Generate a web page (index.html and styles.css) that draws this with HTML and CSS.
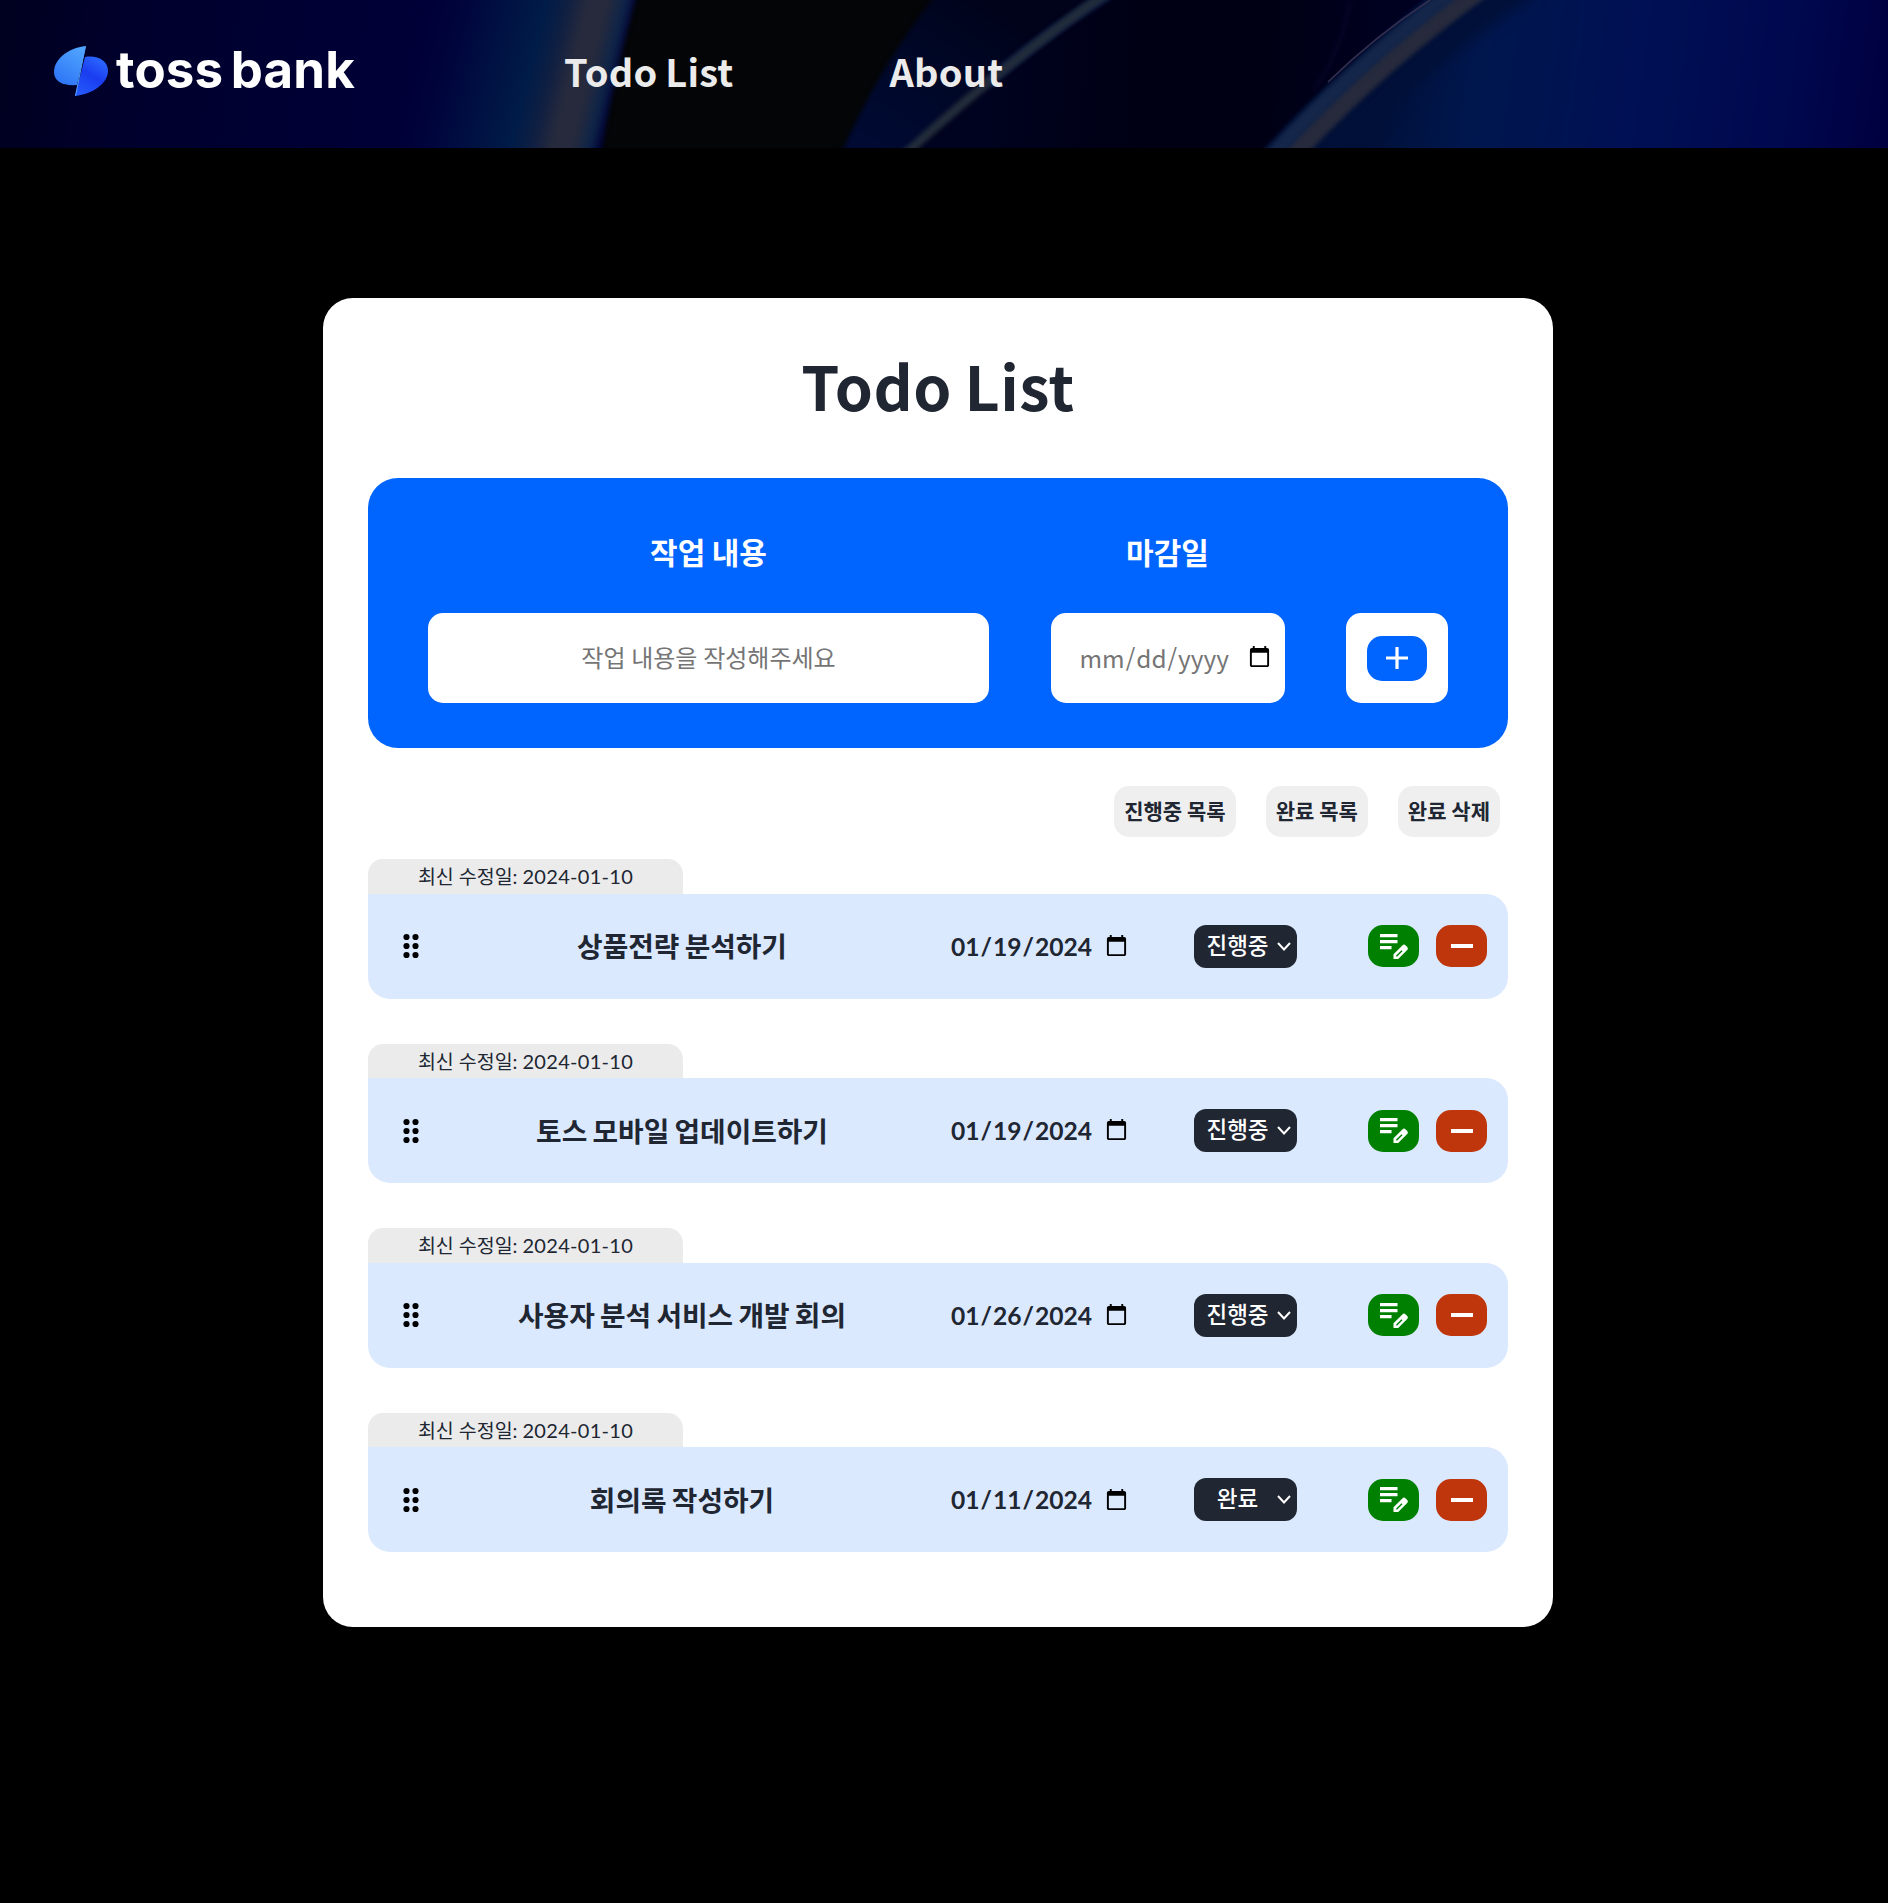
FILE: index.html
```html
<!DOCTYPE html>
<html lang="ko">
<head>
<meta charset="utf-8">
<title>Todo List</title>
<link rel="stylesheet" href="styles.css">
</head>
<body>
<header class="header">
  <svg class="header-bg" viewBox="0 0 1888 148" preserveAspectRatio="none" aria-hidden="true">
    <defs>
      <linearGradient id="left" gradientUnits="userSpaceOnUse" x1="0" y1="0" x2="420" y2="60"><stop offset="0" stop-color="#00001f"/><stop offset=".3" stop-color="#00002c"/><stop offset="1" stop-color="#000038"/></linearGradient>
      <linearGradient id="beam" gradientUnits="userSpaceOnUse" x1="416" y1="24" x2="620" y2="74"><stop offset="0" stop-color="#000038" stop-opacity="0"/><stop offset=".25" stop-color="#00083e"/><stop offset=".58" stop-color="#001c48"/><stop offset=".68" stop-color="#101f42"/><stop offset=".77" stop-color="#262a3c"/><stop offset=".86" stop-color="#262a3c"/><stop offset=".94" stop-color="#0e2448"/><stop offset="1" stop-color="#000034"/></linearGradient>
      <linearGradient id="wedge" gradientUnits="userSpaceOnUse" x1="880" y1="148" x2="980" y2="0"><stop offset="0" stop-color="#000a32"/><stop offset=".5" stop-color="#000828"/><stop offset="1" stop-color="#00031a"/></linearGradient>
      <linearGradient id="mid" gradientUnits="userSpaceOnUse" x1="990" y1="80" x2="1380" y2="100"><stop offset="0" stop-color="#00031f"/><stop offset=".4" stop-color="#000014"/><stop offset=".7" stop-color="#000014"/><stop offset="1" stop-color="#000020"/></linearGradient>
      <linearGradient id="right" gradientUnits="userSpaceOnUse" x1="1380" y1="40" x2="1888" y2="110"><stop offset="0" stop-color="#001038"/><stop offset=".2" stop-color="#00174e"/><stop offset=".5" stop-color="#001054"/><stop offset=".8" stop-color="#00084e"/><stop offset="1" stop-color="#000040"/></linearGradient>
      <filter id="soft" filterUnits="userSpaceOnUse" x="-20" y="-30" width="1930" height="210" color-interpolation-filters="sRGB"><feGaussianBlur stdDeviation="7"/></filter>
      <filter id="edge" filterUnits="userSpaceOnUse" x="-20" y="-30" width="1930" height="210" color-interpolation-filters="sRGB"><feGaussianBlur stdDeviation="2"/></filter>
    </defs>
    <rect width="1888" height="148" fill="#040507"/>
    <path d="M-10 -20H520V170H-10Z" fill="url(#left)"/>
    <path d="M350 -20H642Q617 60 598 170H350Z" fill="url(#beam)" filter="url(#edge)"/>
    <path d="M948 -20Q880 60 834 170H1000L1200 -20Z" fill="url(#wedge)" filter="url(#edge)"/>
    <path d="M1136 -20Q1006 60 888 170H1300L1460 -20Z" fill="url(#mid)"/>
    <path d="M1132 -20Q1056 24 986 84" fill="none" stroke="#0c1c48" stroke-width="10" filter="url(#edge)"/>
    <path d="M1126 -20Q1006 60 888 170" fill="none" stroke="#222c3a" stroke-width="9" filter="url(#edge)"/>
    <path d="M1450 -20Q1338 65 1245 170H1900V-20Z" fill="url(#right)" filter="url(#edge)"/>
    <path d="M1527 -20Q1398 65 1317 170" fill="none" stroke="#001038" stroke-width="34" filter="url(#soft)"/>
    <path d="M1493 -20Q1373 65 1279 170" fill="none" stroke="#262a3c" stroke-width="20" filter="url(#edge)"/>
    <path d="M1469 -20Q1352 65 1259 170" fill="none" stroke="#14264a" stroke-width="15" filter="url(#edge)"/>
    <path d="M1430 0Q1375 36 1328 82" fill="none" stroke="#35304e" stroke-width="1.5"/>
    <path d="M1350 0Q1342 50 1314 90" fill="none" stroke="#06062a" stroke-width="3" filter="url(#edge)"/>
  </svg>
  <a class="logo" href="#" aria-label="toss bank">
    <svg class="logo-mark" viewBox="0 0 56 52" aria-hidden="true">
      <defs>
        <linearGradient id="lm" x1=".8" y1="0" x2=".3" y2="1"><stop offset="0" stop-color="#51a6ff"/><stop offset="1" stop-color="#2e75f6"/></linearGradient>
        <linearGradient id="rm" x1=".8" y1="0" x2=".3" y2="1"><stop offset="0" stop-color="#2e6cff"/><stop offset=".5" stop-color="#1a3df0"/><stop offset="1" stop-color="#2458fa"/></linearGradient>
      </defs>
      <path d="M32 12C45 10 55 16 55 26C55 38 40 49 22 51Z" fill="url(#rm)"/>
      <path d="M33 1C14 3 1 15 1 27C1 36 9 41 24 40Z" fill="url(#lm)"/>
      <path d="M32.500 1L22.500 51" stroke="#4fa0ff"/>
    </svg>
    <span class="logo-text">toss bank</span>
  </a>
  <nav class="nav"><a href="#">Todo List</a><a href="#">About</a></nav>
</header>
<main class="card">
  <h1 class="title">Todo List</h1>
  <form class="form">
    <label class="field field-task"><span class="label">작업 내용</span><input class="box" type="text" placeholder="작업 내용을 작성해주세요"></label>
    <label class="field field-date"><span class="label">마감일</span><input class="box date-box" type="date"></label>
    <div class="add-box"><button class="add" type="button" aria-label="추가"><svg viewBox="0 0 22 22" width="22" height="22"><path d="M11 0V22M0 11H22" stroke="#fff" stroke-width="3.200"/></svg></button></div>
  </form>
  <div class="filters"><button>진행중 목록</button><button>완료 목록</button><button>완료 삭제</button></div>
  <ul class="list" id="list"></ul>
</main>
<script src="app.js"></script>
</body>
</html>
```
FILE: app.js
```js
const todos = [
  ["상품전략 분석하기", "2024-01-19", "진행중"],
  ["토스 모바일 업데이트하기", "2024-01-19", "진행중"],
  ["사용자 분석 서비스 개발 회의", "2024-01-26", "진행중"],
  ["회의록 작성하기", "2024-01-11", "완료"],
];

document.getElementById("list").innerHTML = todos.map(([task, due, state]) => `
<li class="item">
  <div class="tab">최신 수정일: <span class="tab-date">2024-01-10</span></div>
  <div class="row">
    <svg class="grip" viewBox="0 0 16 26" width="16" height="26"><g fill="#000"><circle cx="3.5" cy="4" r="3.1"/><circle cx="12.5" cy="4" r="3.1"/><circle cx="3.5" cy="13" r="3.1"/><circle cx="12.5" cy="13" r="3.1"/><circle cx="3.5" cy="22" r="3.1"/><circle cx="12.5" cy="22" r="3.1"/></g></svg>
    <span class="task">${task}</span>
    <input class="due" type="date" value="${due}">
    <span class="state-wrap"><select class="state"><option>${state}</option></select><svg class="chevron" viewBox="0 0 14 9" width="14" height="9"><path d="M1 1L7 7.500L13 1" fill="none" stroke="#fff" stroke-width="2"/></svg></span>
    <button class="act edit" aria-label="수정"><svg viewBox="0 0 28 25" width="28" height="25"><path d="M0 1.7H17.500M0 7.700H17.500M0 13.700H11.500" stroke="#fff" stroke-width="3.200"/><path fill="#fff" fill-rule="evenodd" d="M13.500 25V20.200L22.600 11.200Q24 10 25.400 11.200L27.200 13Q28.500 14.400 27.200 15.900L18.200 25ZM16.200 22.500H17.200L22.500 17.200L21.500 16.200L16.200 21.500Z"/></svg></button>
    <button class="act del" aria-label="삭제"><svg viewBox="0 0 22 4" width="22" height="4"><path d="M0 2H22" stroke="#fff" stroke-width="4"/></svg></button>
  </div>
</li>`).join("");
```
FILE: styles.css
```css
* { box-sizing: border-box; }
body { margin: 0; min-height: 1903px; background: #000; color: #202632; font-family: "Noto Sans CJK KR", sans-serif; }
button, input, select { font-family: inherit; color: inherit; border: 0; }
button { padding: 0; cursor: pointer; }
.header { position: relative; display: flex; align-items: center; height: 148px; padding: 0 0 6px 53px; overflow: hidden; }
.header-bg { position: absolute; inset: 0; width: 100%; height: 100%; }
.logo { position: relative; display: flex; align-items: center; gap: 7px; width: 511px; color: #fff; text-decoration: none; }
.logo-mark { width: 56px; height: 52px; }
.logo-text { padding-bottom: 2px; font: 700 51px/60px Inter, sans-serif; letter-spacing: .2px; word-spacing: -5px; white-space: nowrap; }
.nav { position: relative; display: flex; gap: 156px; }
.nav a { color: #ebebeb; font-size: 38px; font-weight: 700; line-height: 56px; letter-spacing: .2px; word-spacing: -3px; text-decoration: none; }
.card { width: 1230px; height: 1329px; margin: 150px 0 0 323px; padding: 42px 45px 0; background: #fff; border-radius: 30px; }
.title { margin: 0 0 48px; font-size: 61px; line-height: 90px; font-weight: 700; letter-spacing: .5px; word-spacing: -5px; text-align: center; }
.form { display: flex; justify-content: space-between; align-items: flex-end; height: 270px; padding: 0 60px 45px; background: #0064ff; border-radius: 30px; }
.field { display: flex; flex-direction: column; align-items: center; gap: 40px; }
.field-task { width: 561px; }
.field-date { width: 234px; }
.label { color: #fff; font-size: 30px; line-height: 44px; font-weight: 700; word-spacing: -2px; }
.box { width: 100%; height: 90px; padding: 0 0 3px; border-radius: 15px; background: #fff; font-size: 24px; text-align: center; word-spacing: -1px; }
.box::placeholder { color: #757575; }
.date-box { padding: 0 11px 1px 28px; color: #757575; font-size: 24.400px; text-align: left; }
.add-box { display: grid; place-items: center; width: 102px; height: 90px; border-radius: 15px; background: #fff; }
.add { display: grid; place-items: center; width: 60px; height: 45px; border-radius: 15px; background: #0064ff; }
.filters { display: flex; justify-content: flex-end; gap: 30px; margin: 38px 8px 22px 0; }
.filters button { height: 51px; padding: 0 10px 4px; border-radius: 15px; background: #efefef; font-size: 21px; font-weight: 700; word-spacing: -1px; }
.list { display: grid; gap: 45px; margin: 0; padding: 0; list-style: none; }
.tab { width: 315px; height: 34.600px; border-radius: 15px 15px 0 0; background: #ebebeb; font: 19.500px/34px Lato, "Noto Sans CJK KR", sans-serif; text-align: center; }
.tab-date { font-size: 20px; letter-spacing: .3px; }
.row { display: flex; align-items: center; height: 105px; padding: 0 21px 0 35px; background: #dbe9ff; border-radius: 0 22px 22px 22px; }
.task { width: 522px; margin-left: 2px; padding-bottom: 2px; font-size: 27.800px; font-weight: 700; text-align: center; word-spacing: -2.500px; }
.due { width: 181px; margin-left: 7px; padding: 0; background: none; font: 700 24.600px Lato, sans-serif; }
.state-wrap { position: relative; display: flex; margin-left: 63px; }
.state { width: 103px; height: 43px; padding: 0 16px 5px 0; border-radius: 12px; background: #202632; color: #fff; font-size: 22.500px; font-weight: 500; text-align: center; appearance: none; }
.chevron { position: absolute; right: 6px; top: 17px; pointer-events: none; }
.act { display: grid; place-items: center; width: 51px; height: 42px; border-radius: 15px; }
.edit { margin-left: auto; background: #008000; }
.del { margin-left: 17px; background: #c0360c; }
```
